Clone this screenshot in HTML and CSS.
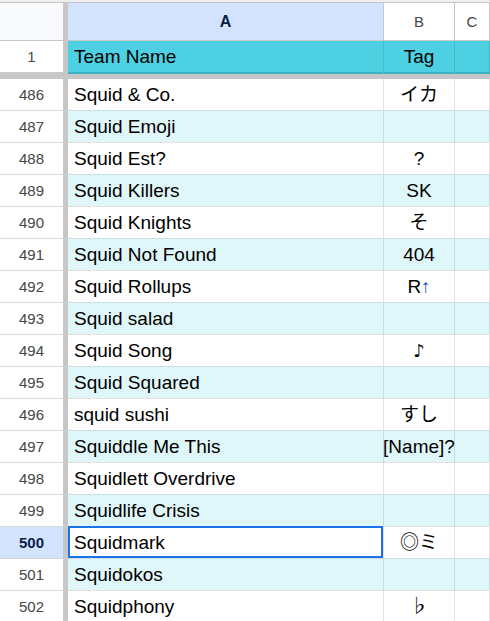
FILE: index.html
```html
<!DOCTYPE html>
<html>
<head>
    <title>Team Names</title>
    <meta name="viewport" content="width=device-width, initial-scale=1">
    <link rel="stylesheet" href="styles.css">
</head>

<body>
    <div class="sheet">
        <div class="row col-heads">
            <div class="corner"></div>
            <div class="col-head selected">A</div>
            <div class="col-head">B</div>
            <div class="col-head">C</div>
        </div>

        <div class="row title-row">
            <div class="row-head">1</div>
            <div class="cell">Team Name</div>
            <div class="cell tag">Tag</div>
            <div class="cell"></div>
        </div>
        <div class="freeze"></div>

        <div class="row">
            <div class="row-head">486</div>
            <div class="cell">Squid &amp; Co.</div>
            <div class="cell tag">イカ</div>
            <div class="cell"></div>
        </div>
        <div class="row alt">
            <div class="row-head">487</div>
            <div class="cell">Squid Emoji</div>
            <div class="cell tag"></div>
            <div class="cell"></div>
        </div>
        <div class="row">
            <div class="row-head">488</div>
            <div class="cell">Squid Est?</div>
            <div class="cell tag">?</div>
            <div class="cell"></div>
        </div>
        <div class="row alt">
            <div class="row-head">489</div>
            <div class="cell">Squid Killers</div>
            <div class="cell tag">SK</div>
            <div class="cell"></div>
        </div>
        <div class="row">
            <div class="row-head">490</div>
            <div class="cell">Squid Knights</div>
            <div class="cell tag">そ</div>
            <div class="cell"></div>
        </div>
        <div class="row alt">
            <div class="row-head">491</div>
            <div class="cell">Squid Not Found</div>
            <div class="cell tag">404</div>
            <div class="cell"></div>
        </div>
        <div class="row">
            <div class="row-head">492</div>
            <div class="cell">Squid Rollups</div>
            <div class="cell tag">R<span class="arrow">↑</span></div>
            <div class="cell"></div>
        </div>
        <div class="row alt">
            <div class="row-head">493</div>
            <div class="cell">Squid salad</div>
            <div class="cell tag"></div>
            <div class="cell"></div>
        </div>
        <div class="row">
            <div class="row-head">494</div>
            <div class="cell">Squid Song</div>
            <div class="cell tag note">♪</div>
            <div class="cell"></div>
        </div>
        <div class="row alt">
            <div class="row-head">495</div>
            <div class="cell">Squid Squared</div>
            <div class="cell tag"></div>
            <div class="cell"></div>
        </div>
        <div class="row">
            <div class="row-head">496</div>
            <div class="cell">squid sushi</div>
            <div class="cell tag">すし</div>
            <div class="cell"></div>
        </div>
        <div class="row alt">
            <div class="row-head">497</div>
            <div class="cell">Squiddle Me This</div>
            <div class="cell tag">[Name]?</div>
            <div class="cell"></div>
        </div>
        <div class="row">
            <div class="row-head">498</div>
            <div class="cell">Squidlett Overdrive</div>
            <div class="cell tag"></div>
            <div class="cell"></div>
        </div>
        <div class="row alt">
            <div class="row-head">499</div>
            <div class="cell">Squidlife Crisis</div>
            <div class="cell tag"></div>
            <div class="cell"></div>
        </div>
        <div class="row">
            <div class="row-head current">500</div>
            <div class="cell active">Squidmark</div>
            <div class="cell tag">◎ミ</div>
            <div class="cell"></div>
        </div>
        <div class="row alt">
            <div class="row-head">501</div>
            <div class="cell">Squidokos</div>
            <div class="cell tag"></div>
            <div class="cell"></div>
        </div>
        <div class="row">
            <div class="row-head">502</div>
            <div class="cell">Squidphony</div>
            <div class="cell tag">♭</div>
            <div class="cell"></div>
        </div>
    </div>
</body>
</html>
```

FILE: styles.css
```css
html {
    background-color: #eeeeee;
}

body {
    margin: 0;
    padding-top: 2px;
    font-family: "Liberation Sans", Arial, "Noto Sans CJK JP", "DejaVu Sans", sans-serif;
    color: #000;
    overflow: hidden;
}

.sheet {
    background-color: #fff;
}

.row {
    display: grid;
    grid-template-columns: 68px 316px 71px 1fr;
    height: 32px;
}

/* column letters */
.col-heads {
    height: 37px;
    border-top: 1px solid #c7c7c7;
    border-bottom: 1px solid #c7c7c7;
}

.corner {
    background-color: #f8f9fa;
    border-right: 5px solid #c7c7c7;
}

.col-head {
    display: flex;
    align-items: center;
    justify-content: center;
    font-size: 15px;
    color: #444746;
    background-color: #fff;
    border-right: 1px solid #c7c7c7;
}

.col-head.selected {
    background-color: #d3e3fd;
    color: #041e49;
    font-weight: bold;
    font-size: 16px;
}

/* row numbers */
.row-head {
    display: flex;
    align-items: flex-end;
    justify-content: center;
    padding-bottom: 4px;
    font-size: 15px;
    line-height: 22px;
    color: #444746;
    background-color: #fff;
    border-right: 5px solid #c7c7c7;
    border-bottom: 1px solid #d6d6d6;
    box-sizing: border-box;
}

.row-head.current {
    background-color: #d3e3fd;
    color: #0b1f4a;
    font-weight: bold;
}

/* cells */
.cell {
    position: relative;
    display: flex;
    align-items: flex-end;
    padding: 0 6px 4px;
    font-size: 19px;
    line-height: 22px;
    white-space: nowrap;
    background-color: #fff;
    border-right: 1px solid #e1e1e1;
    border-bottom: 1px solid #c9dfe2;
    box-sizing: border-box;
}

.cell.tag {
    justify-content: center;
    padding: 0 0 4px;
}

.cell.note {
    font-family: "DejaVu Sans", sans-serif;
    font-size: 18px;
}

.alt .cell {
    background-color: #e0f7fa;
    border-right-color: #c6dde0;
    border-bottom-color: #e1e1e1;
}

.arrow {
    color: #1a56b8;
}

.cell.active::after {
    content: "";
    position: absolute;
    top: -1px;
    left: 0;
    right: 0;
    bottom: 0;
    border: 2px solid #1a73e8;
}

/* header row with teal fill */
.title-row {
    height: 33px;
}

.title-row .row-head,
.title-row .cell {
    padding-bottom: 4px;
}

.title-row .row-head {
    border-bottom: 2px solid #c7c7c7;
}

.title-row .cell {
    background-color: #4dd0e1;
    border-right-color: #3fbccc;
    border-bottom: 2px solid #3ab3c2;
}

.freeze {
    height: 5px;
    background-color: #c7c7c7;
}
```
